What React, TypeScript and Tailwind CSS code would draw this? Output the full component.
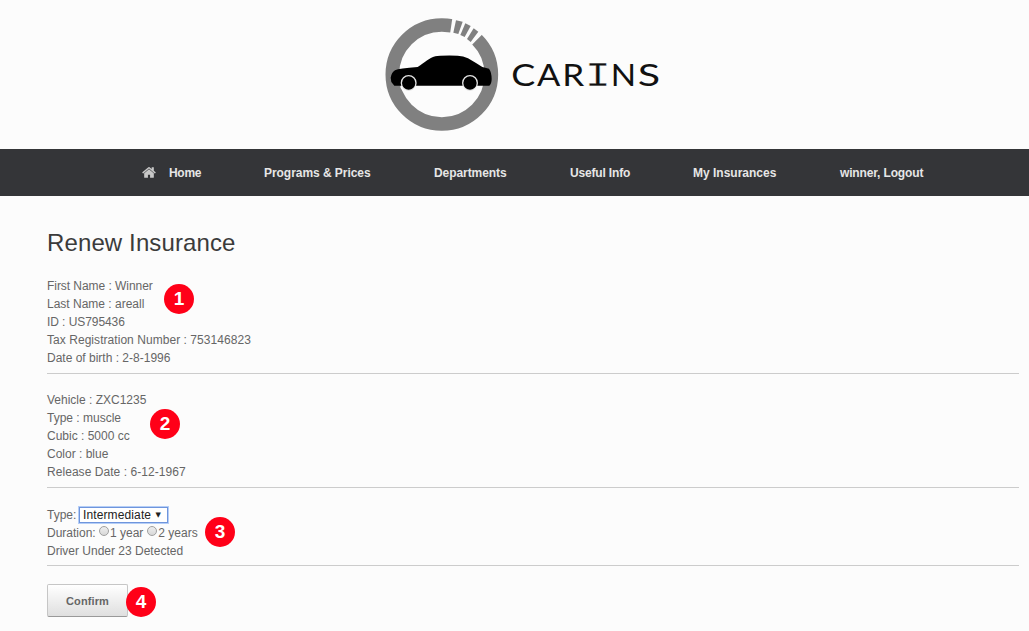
import type { ReactNode } from "react";

function HomeIcon() {
  return (
    <svg viewBox="0 0 1664 1792" className="mr-[13px] h-[15px] w-[14px]" fill="#c8c8c8" aria-hidden="true">
      <path d="M1408 992v480q0 26-19 45t-45 19h-384v-384h-256v384h-384q-26 0-45-19t-19-45v-480q0-1 .5-3t.5-3l575-474 575 474q1 2 1 6zm223-69l-62 74q-8 9-21 11h-3q-13 0-21-7l-692-577-692 577q-12 8-24 7-13-2-21-11l-62-74q-8-10-7-23.5t11-21.5l719-599q32-26 76-26t76 26l244 204v-195q0-14 9-23t23-9h192q14 0 23 9t9 23v408l219 182q10 8 11 21.5t-7 23.5z" />
    </svg>
  );
}

function Logo() {
  return (
    <svg
      viewBox="0 0 900 390"
      className="ml-[376px] h-[130px] w-[300px]"
      role="img"
      aria-label="Carins"
    >
      <circle cx="197.5" cy="193.5" r="148.5" fill="none" stroke="#808080" strokeWidth="41" />
      <path d="M230 18 L222 72 L288 104 L320 72 L290 25 Z" fill="#fcfcfc" />
      <g fill="#808080">
        <path d="M240 31 L260 35 L247 72 L232 68 Z" />
        <path d="M268 40 L284 48 L266 81 L253 75 Z" />
        <path d="M293 55 L307 65 L284 96 L273 87 Z" />
      </g>
      <path
        d="M44 203 Q47 187 57 181 Q69 175 125 171 C148 157 158 145 178 139 Q190 136 245 137 Q262 138 276 145 Q300 159 319 171 L339 176 Q347 187 347 207 Q347 221 340 227 L55 227 L46 216 Z"
        fill="#000"
      />
      <g fill="#000" stroke="#e4e4e4" strokeWidth="4">
        <circle cx="98" cy="219" r="22" />
        <circle cx="282" cy="219" r="22" />
      </g>
      <path d="M75 229 A24 24 0 0 0 121 229 M259 229 A24 24 0 0 0 305 229" fill="none" stroke="#fcfcfc" strokeWidth="6" />
      <g fill="#111" fontFamily="Lato, sans-serif" fontSize="95">
        <text x="406" y="229" textLength="72" lengthAdjust="spacingAndGlyphs">C</text>
        <text x="483" y="229" textLength="70" lengthAdjust="spacingAndGlyphs">A</text>
        <text x="559" y="229" textLength="66" lengthAdjust="spacingAndGlyphs">R</text>
        <text x="627" y="229" textLength="77" lengthAdjust="spacingAndGlyphs" fontFamily="Liberation Mono, monospace" fontSize="104" stroke="#fcfcfc" strokeWidth="1">I</text>
        <text x="704" y="229" textLength="76" lengthAdjust="spacingAndGlyphs">N</text>
        <text x="785" y="229" textLength="67" lengthAdjust="spacingAndGlyphs">S</text>
      </g>
    </svg>
  );
}

function Badge({ n, className }: { n: number; className: string }) {
  return (
    <span
      className={`absolute flex size-[30px] items-center justify-center rounded-full bg-[#ff0018] pb-px text-[19px] font-bold leading-none text-white ${className}`}
    >
      {n}
    </span>
  );
}

function Section({ className, children }: { className: string; children: ReactNode }) {
  return <section className={`relative border-b border-[#ccc] ${className}`}>{children}</section>;
}

function Radio({ label }: { label: string }) {
  return (
    <label className="flex">
      <input
        type="radio"
        name="duration"
        className="mt-[2px] mr-px ml-px size-[10px] appearance-none rounded-full border border-[#a0a0a0] bg-linear-to-b from-[#eee] to-[#d8d8d8]"
      />
      {label}
    </label>
  );
}

export default function App() {
  return (
    <div className="h-[631px] w-[1029px] overflow-hidden bg-[#fcfcfc] font-['Liberation_Sans',Arial,sans-serif] text-xs leading-[18px] text-[#666]">
      <header className="h-[149px] pt-[10px]">
        <Logo />
      </header>
      <nav className="flex h-[47px] items-center bg-[#343538] pl-[142px] font-bold text-[#e6e6e6]">
        <a className="flex w-[122px] items-center tracking-[-0.3px]">
          <HomeIcon />
          Home
        </a>
        <a className="w-[170px] tracking-[-0.05px]">Programs &amp; Prices</a>
        <a className="w-[136px] tracking-[-0.07px]">Departments</a>
        <a className="w-[123px] tracking-[-0.17px]">Useful Info</a>
        <a className="w-[147px]">My Insurances</a>
        <a className="tracking-[-0.15px]">winner, Logout</a>
      </nav>
      <main className="pr-[10px] pl-[47px]">
        <h1 className="pt-[32px] text-2xl leading-[30px] tracking-[0.12px] text-[#3b3b3b]">Renew Insurance</h1>
        <Section className="mt-[19px] h-[97px]">
          <p className="tracking-[-0.05px]">First Name : Winner</p>
          <p>Last Name : areall</p>
          <p className="tracking-[-0.07px]">ID : US795436</p>
          <p className="tracking-[0.05px]">Tax Registration Number : 753146823</p>
          <p>Date of birth : 2-8-1996</p>
          <Badge n={1} className="top-[7px] left-[117px]" />
        </Section>
        <Section className="mt-[17px] h-[97px]">
          <p>Vehicle : ZXC1235</p>
          <p>Type : muscle</p>
          <p>Cubic : 5000 cc</p>
          <p>Color : blue</p>
          <p className="tracking-[0.05px]">Release Date : 6-12-1967</p>
          <Badge n={2} className="top-[18px] left-[103px]" />
        </Section>
        <Section className="mt-[18px] h-[60px]">
          <div className="flex h-[18px]">
            <span className="w-[32px]">Type:</span>
            <span className="mt-px grid h-[15px] w-[89px]">
              <select className="col-start-1 row-start-1 appearance-none border border-[#6f95dc] bg-white pt-px pl-[3px] text-xs leading-[13px] tracking-[0.12px] text-[#222] shadow-[0_0_0_1px_#b5cef7] outline-none">
                <option>Intermediate</option>
              </select>
              <span className="pointer-events-none col-start-1 row-start-1 self-center justify-self-end pr-[7px] font-['DejaVu_Sans',sans-serif] text-[7px] leading-none text-[#222]">
                ▼
              </span>
            </span>
          </div>
          <div className="flex">
            <span className="w-[51px]">Duration:</span>
            <Radio label="1 year" />
            <span className="w-[3px]" />
            <Radio label="2 years" />
          </div>
          <p>Driver Under 23 Detected</p>
          <Badge n={3} className="top-[11px] left-[158px]" />
        </Section>
        <div className="relative mt-[18px]">
          <button className="h-[33px] w-[81px] rounded-[2px] border border-[#c6c6c6] border-b-[#999] bg-linear-to-b from-white to-[#dfdfdf] text-[11px] font-bold tracking-[0.1px] text-[#666]">
            Confirm
          </button>
          <Badge n={4} className="top-[3px] left-[79px]" />
        </div>
      </main>
    </div>
  );
}
